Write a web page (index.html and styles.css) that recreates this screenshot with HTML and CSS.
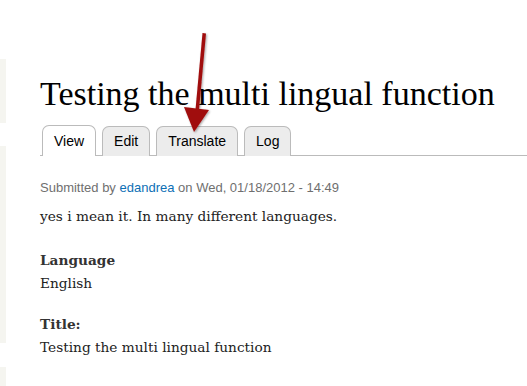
FILE: index.html
```html
<!DOCTYPE html>
<html>
<head>
<meta charset="utf-8">
<link rel="stylesheet" href="styles.css">
</head>
<body>
<div class="page">
  <div class="sidebar">
    <div class="strip strip-a"></div>
    <div class="strip strip-b"></div>
    <div class="strip strip-c"></div>
  </div>
  <main class="content">
    <h1 class="title">Testing the multi lingual function</h1>
    <ul class="tabs">
      <li class="tab active">View</li>
      <li class="tab">Edit</li>
      <li class="tab">Translate</li>
      <li class="tab">Log</li>
    </ul>
    <p class="submitted">Submitted by <a class="user">edandrea</a> on Wed, 01/18/2012 - 14:49</p>
    <p class="body">yes i mean it. In many different languages.</p>
    <div class="field">
      <div class="label">Language</div>
      <div class="value">English</div>
    </div>
    <div class="field">
      <div class="label">Title:</div>
      <div class="value">Testing the multi lingual function</div>
    </div>
  </main>
  <svg class="arrow" width="40" height="110" viewBox="0 0 40 110">
    <defs>
      <filter id="sh" x="-50%" y="-20%" width="200%" height="140%">
        <feDropShadow dx="1" dy="1" stdDeviation="1" flood-color="#000" flood-opacity="0.35"/>
      </filter>
    </defs>
    <g filter="url(#sh)" fill="#a00d0d">
      <path d="M22.5 5 L26 5.5 L19 82 L15.5 81.5 Z"/>
      <path d="M4 79 L29 82 L14 104 Z"/>
    </g>
  </svg>
</div>
</body>
</html>
```
FILE: styles.css
```css
* { box-sizing: border-box; }
html, body { margin: 0; padding: 0; background: #fff; }
.page {
  position: relative;
  width: 527px;
  height: 386px;
  overflow: hidden;
  display: flex;
}
.sidebar {
  width: 40px;
  flex: none;
  display: flex;
  flex-direction: column;
}
.strip { width: 6px; background: #f5f5f0; }
.strip-a { margin-top: 59px; height: 68px; }
.strip-b { margin-top: 23px; height: 208px; }
.strip-c { margin-top: 24px; height: 20px; }
.content { flex: 1; min-width: 0; }
.title {
  margin: 74px 0 0 0;
  font-family: "Liberation Serif", "Times New Roman", serif;
  font-weight: normal;
  font-size: 34px;
  line-height: 40px;
  color: #000;
  white-space: nowrap;
}
.tabs {
  list-style: none;
  margin: 11px 0 0 0;
  padding: 0 0 0 2px;
  display: flex;
  gap: 6px;
  border-bottom: 1px solid #bbb;
  height: 31px;
}
.tab {
  font-family: "Liberation Sans", Arial, sans-serif;
  font-size: 14px;
  color: #000;
  background: #ececec;
  border: 1px solid #bbb;
  border-bottom: none;
  border-radius: 7px 7px 0 0;
  height: 30px;
  margin-top: 1px;
  padding: 6px 11px 0;
  min-width: 47px;
  text-align: center;
}
.tab.active {
  background: #fff;
  height: 31px;
  margin-top: 0;
  padding-top: 7px;
}
.submitted {
  margin: 24px 0 0 0;
  font-family: "Liberation Sans", Arial, sans-serif;
  font-size: 13px;
  line-height: 16px;
  color: #6f6f6f;
}
.user { color: #0d6fb5; }
.body {
  margin: 9px 0 0 0;
  font-family: "DejaVu Serif", Georgia, serif;
  font-size: 13.7px;
  line-height: 22px;
  color: #222;
}
.field {
  margin-top: 22px;
  font-family: "DejaVu Serif", Georgia, serif;
  font-size: 13.7px;
  line-height: 23px;
  color: #222;
}
.field + .field { margin-top: 18px; }
.label { font-weight: bold; color: #333; }
.arrow { position: absolute; left: 180px; top: 28px; }
```
